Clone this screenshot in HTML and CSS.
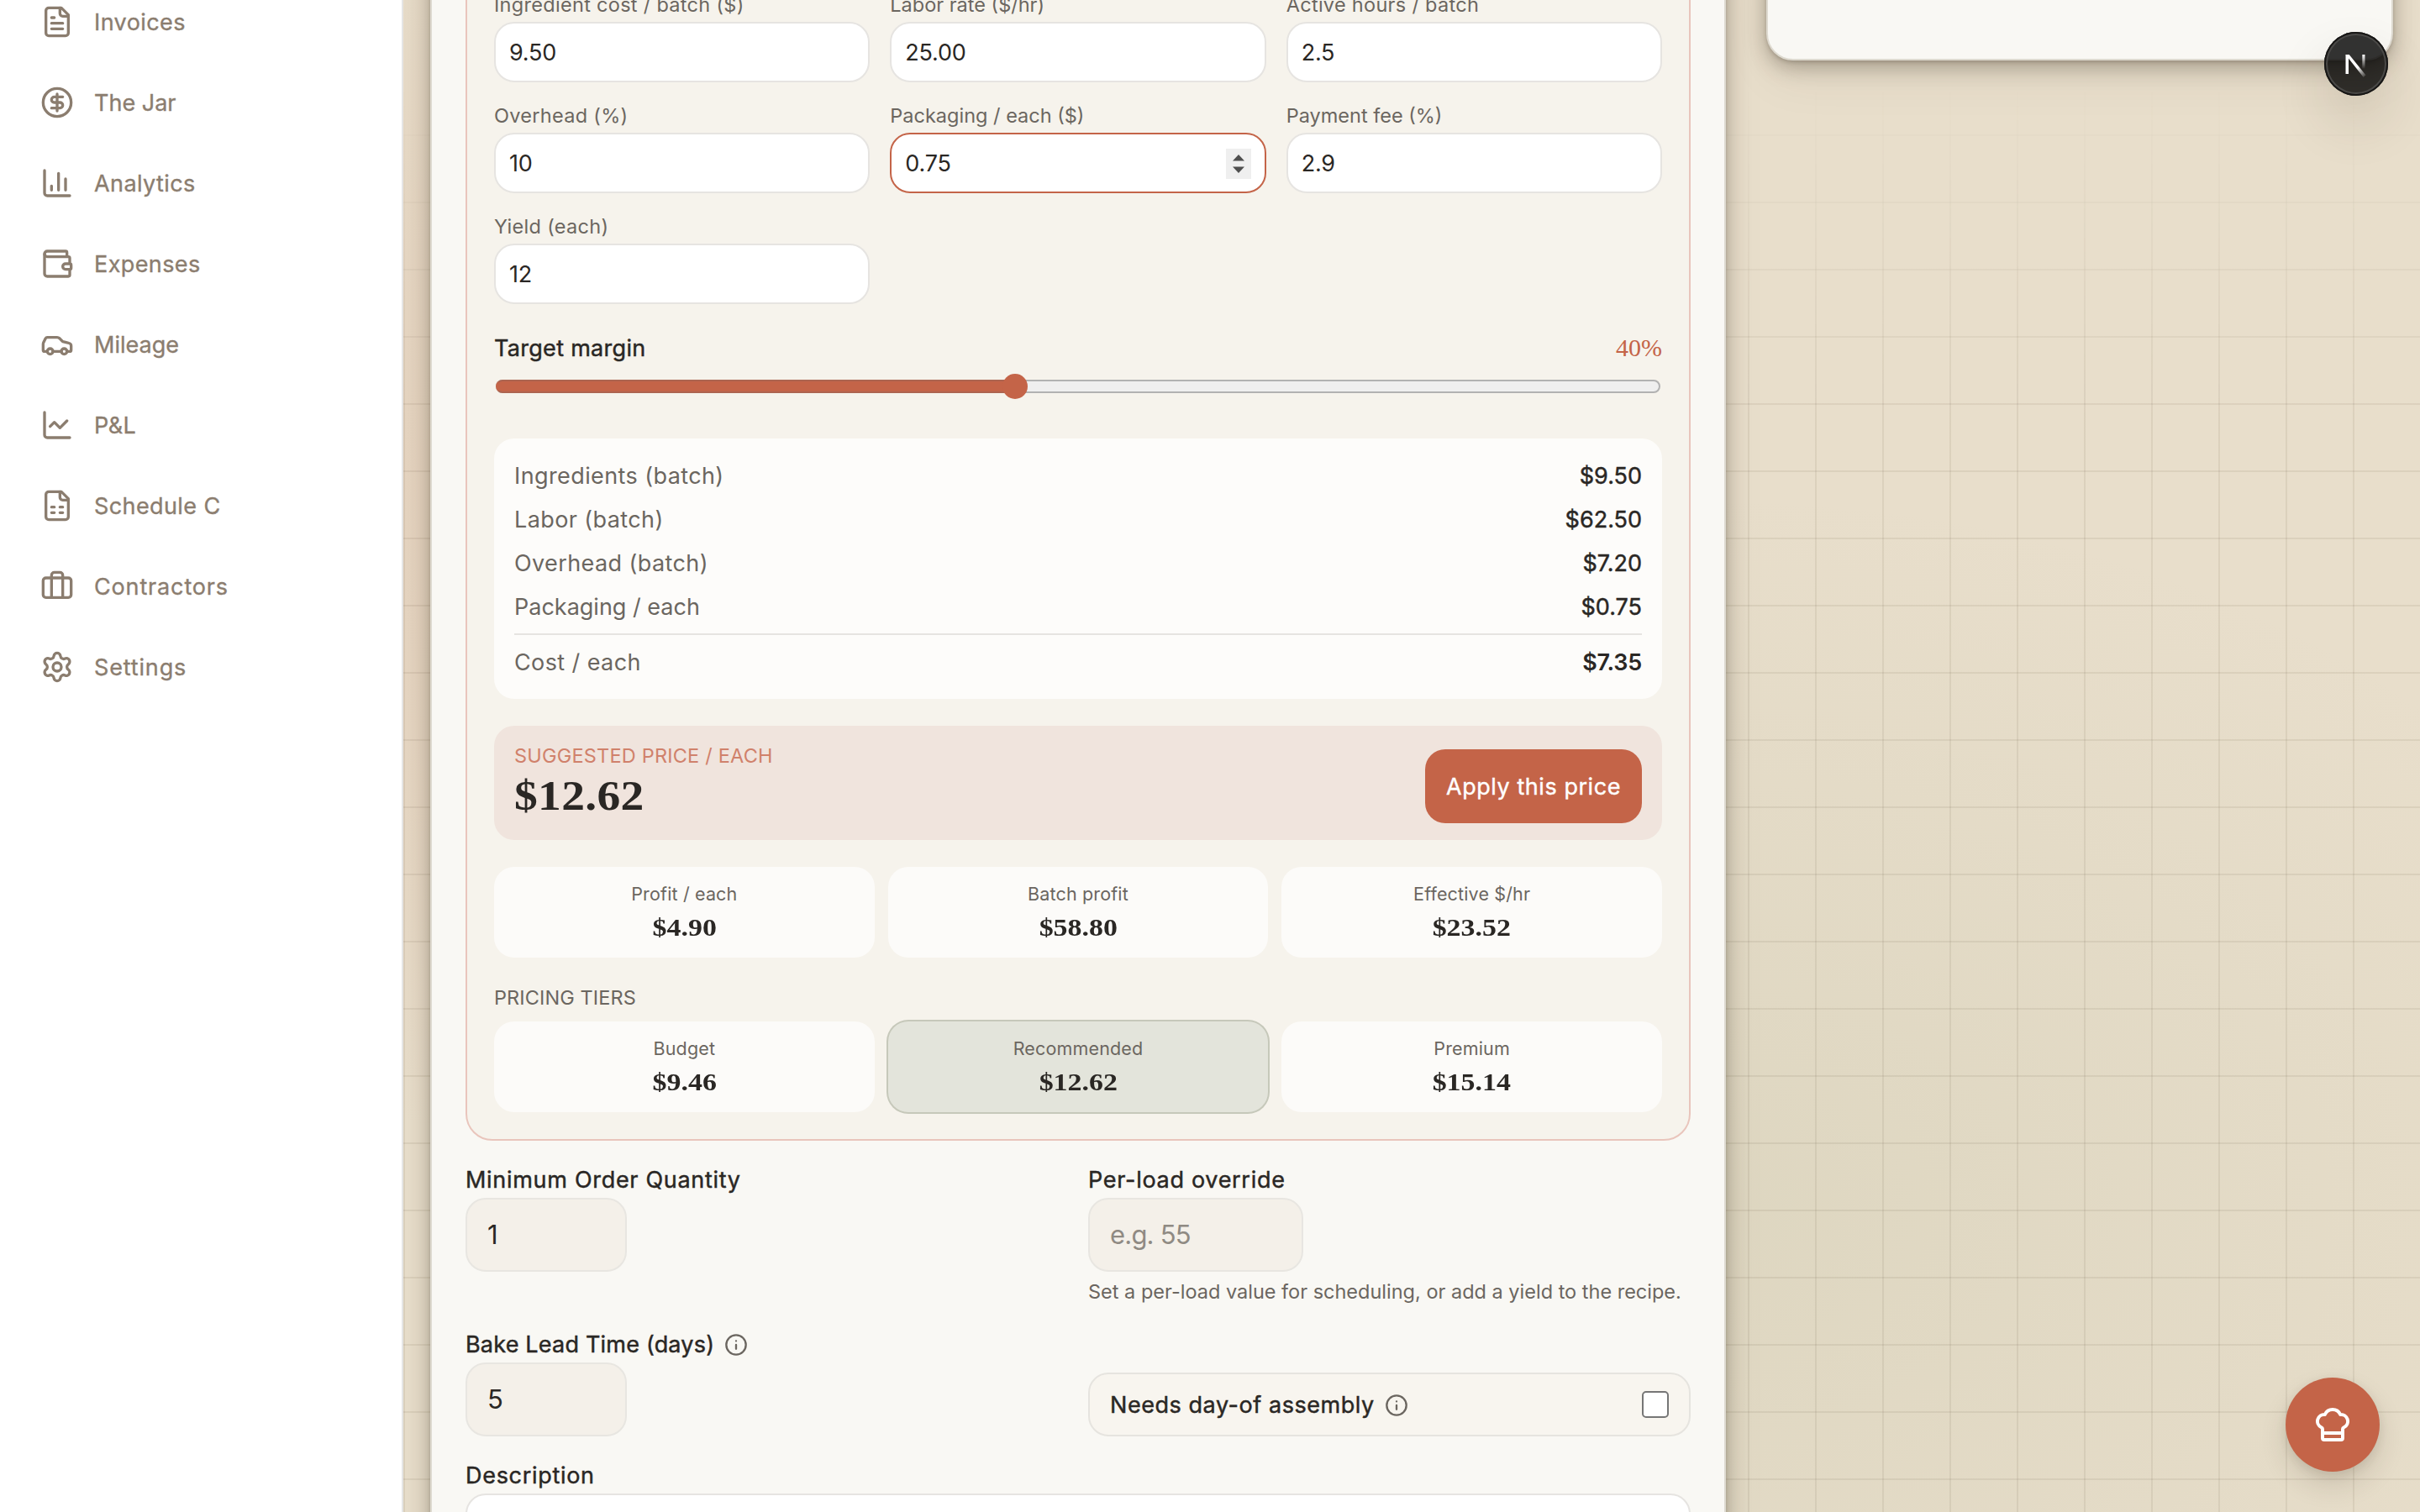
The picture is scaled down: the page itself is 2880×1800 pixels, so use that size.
FILE: index.html
```
<!DOCTYPE html>
<html lang="en">
<head>
<meta charset="utf-8">
<title>Product pricing</title>
<link rel="stylesheet" href="styles.css">
</head>
<body>
<div class="app">
  <aside class="sidebar">
    <nav class="nav">
      <a class="nav-item"><svg class="icon" viewBox="0 0 24 24"><path d="M15 2H6a2 2 0 0 0-2 2v16a2 2 0 0 0 2 2h12a2 2 0 0 0 2-2V7Z"/><path d="M14 2v4a2 2 0 0 0 2 2h4"/><path d="M10 9H8M16 13H8M16 17H8"/></svg><span>Invoices</span></a>
      <a class="nav-item"><svg class="icon" viewBox="0 0 24 24"><circle cx="12" cy="12" r="10"/><path d="M16 8h-6a2 2 0 1 0 0 4h4a2 2 0 1 1 0 4H8"/><path d="M12 18V6"/></svg><span class="tight">The Jar</span></a>
      <a class="nav-item"><svg class="icon" viewBox="0 0 24 24"><path d="M3 3v16a2 2 0 0 0 2 2h16"/><path d="M18 17V9M13 17V5M8 17v-3"/></svg><span>Analytics</span></a>
      <a class="nav-item"><svg class="icon" viewBox="0 0 24 24"><path d="M19 7V4a1 1 0 0 0-1-1H5a2 2 0 0 0 0 4h15a1 1 0 0 1 1 1v4h-3a2 2 0 0 0 0 4h3a1 1 0 0 0 1-1v-2a1 1 0 0 0-1-1"/><path d="M3 5v14a2 2 0 0 0 2 2h15a1 1 0 0 0 1-1v-4"/></svg><span>Expenses</span></a>
      <a class="nav-item"><svg class="icon" viewBox="0 0 24 24"><path d="M19 17h2c.6 0 1-.4 1-1v-3c0-.9-.7-1.7-1.5-1.9C18.7 10.6 16 10 16 10s-1.3-1.4-2.2-2.3c-.5-.4-1.1-.7-1.8-.7H5c-.6 0-1.1.4-1.4.9l-1.4 2.9A3.7 3.7 0 0 0 2 12v4c0 .6.4 1 1 1h2"/><circle cx="7" cy="17" r="2"/><path d="M9 17h6"/><circle cx="17" cy="17" r="2"/></svg><span class="tight">Mileage</span></a>
      <a class="nav-item"><svg class="icon" viewBox="0 0 24 24"><path d="M3 3v16a2 2 0 0 0 2 2h16"/><path d="m19 9-5 5-4-4-3 3"/></svg><span>P&amp;L</span></a>
      <a class="nav-item"><svg class="icon" viewBox="0 0 24 24"><path d="M15 2H6a2 2 0 0 0-2 2v16a2 2 0 0 0 2 2h12a2 2 0 0 0 2-2V7Z"/><path d="M14 2v4a2 2 0 0 0 2 2h4"/><path d="M8 13h2M14 13h2M8 17h2M14 17h2"/></svg><span>Schedule C</span></a>
      <a class="nav-item"><svg class="icon" viewBox="0 0 24 24"><path d="M16 20V4a2 2 0 0 0-2-2h-4a2 2 0 0 0-2 2v16"/><rect x="2" y="6" width="20" height="14" rx="2"/></svg><span class="loose">Contractors</span></a>
      <a class="nav-item"><svg class="icon" viewBox="0 0 24 24"><path d="M9.671 4.136a2.34 2.34 0 0 1 4.659 0 2.34 2.34 0 0 0 3.319 1.915 2.34 2.34 0 0 1 2.33 4.033 2.34 2.34 0 0 0 0 3.831 2.34 2.34 0 0 1-2.33 4.033 2.34 2.34 0 0 0-3.319 1.915 2.34 2.34 0 0 1-4.659 0 2.34 2.34 0 0 0-3.32-1.915 2.34 2.34 0 0 1-2.33-4.033 2.34 2.34 0 0 0 0-3.831A2.34 2.34 0 0 1 6.35 6.051a2.34 2.34 0 0 0 3.319-1.915"/><circle cx="12" cy="12" r="3"/></svg><span class="loose">Settings</span></a>
    </nav>
  </aside>

  <main class="main">
    <section class="card form-card">
      <div class="calculator">
        <div class="fields">
          <label class="field"><span class="field-label wide">Ingredient cost / batch ($)</span><span class="field-input">9.50</span></label>
          <label class="field"><span class="field-label">Labor rate ($/hr)</span><span class="field-input">25.00</span></label>
          <label class="field"><span class="field-label wide">Active hours / batch</span><span class="field-input">2.5</span></label>
          <label class="field"><span class="field-label wide">Overhead (%)</span><span class="field-input">10</span></label>
          <label class="field"><span class="field-label">Packaging / each ($)</span><span class="field-input focused">0.75
            <svg class="stepper" viewBox="0 0 30 36"><path d="M15 7l7 7.500H8zM15 29l7-7.500H8z"/></svg></span></label>
          <label class="field"><span class="field-label">Payment fee (%)</span><span class="field-input">2.9</span></label>
          <label class="field"><span class="field-label wide">Yield (each)</span><span class="field-input">12</span></label>
        </div>

        <div class="margin">
          <div class="margin-head"><span class="strong-label tighter">Target margin</span><span class="margin-value">40%</span></div>
          <div class="slider"><div class="slider-fill" style="width:44.6%"></div><div class="slider-thumb" style="left:44.6%"></div></div>
        </div>

        <dl class="summary">
          <div class="summary-row"><dt class="loose">Ingredients (batch)</dt><dd>$9.50</dd></div>
          <div class="summary-row"><dt class="loose">Labor (batch)</dt><dd>$62.50</dd></div>
          <div class="summary-row"><dt class="loose">Overhead (batch)</dt><dd>$7.20</dd></div>
          <div class="summary-row"><dt>Packaging / each</dt><dd>$0.75</dd></div>
          <div class="summary-row total"><dt class="loose">Cost / each</dt><dd>$7.35</dd></div>
        </dl>

        <div class="suggested">
          <div><div class="suggested-label">SUGGESTED PRICE / EACH</div><div class="suggested-price">$12.62</div></div>
          <button class="apply">Apply this price</button>
        </div>

        <div class="tiles">
          <div class="tile"><span class="tile-label">Profit / each</span><span class="tile-value">$4.90</span></div>
          <div class="tile"><span class="tile-label">Batch profit</span><span class="tile-value">$58.80</span></div>
          <div class="tile"><span class="tile-label">Effective $/hr</span><span class="tile-value">$23.52</span></div>
        </div>

        <div class="tiers">
          <div class="tiers-title">PRICING TIERS</div>
          <div class="tiles">
            <div class="tile"><span class="tile-label">Budget</span><span class="tile-value">$9.46</span></div>
            <div class="tile selected"><span class="tile-label">Recommended</span><span class="tile-value">$12.62</span></div>
            <div class="tile"><span class="tile-label">Premium</span><span class="tile-value">$15.14</span></div>
          </div>
        </div>
      </div>

      <div class="options">
        <div class="option"><span class="strong-label">Minimum Order Quantity</span><span class="big-input small">1</span></div>
        <div class="option"><span class="strong-label">Per-load override</span><span class="big-input medium placeholder">e.g. 55</span><span class="hint">Set a per-load value for scheduling, or add a yield to the recipe.</span></div>
        <div class="option"><span class="strong-label days">Bake Lead Time (days)<svg class="info" viewBox="0 0 24 24"><circle cx="12" cy="12" r="10"/><path d="M12 16v-4M12 8h.01"/></svg></span><span class="big-input small">5</span></div>
        <div class="assembly"><span class="strong-label">Needs day-of assembly<svg class="info" viewBox="0 0 24 24"><circle cx="12" cy="12" r="10"/><path d="M12 16v-4M12 8h.01"/></svg></span><span class="checkbox"></span></div>
      </div>

      <div class="option"><span class="strong-label">Description</span><div class="textarea"></div></div>
    </section>

    <section class="card side-card"></section>
  </main>
</div>

<div class="dev-badge">
  <svg viewBox="0 0 76 76">
    <defs>
      <linearGradient id="fade-diag" gradientUnits="userSpaceOnUse" x1="40" y1="42" x2="50" y2="54"><stop offset="0" stop-color="#fff"/><stop offset="1" stop-color="#fff" stop-opacity="0"/></linearGradient>
      <linearGradient id="fade-bar" gradientUnits="userSpaceOnUse" x1="0" y1="27" x2="0" y2="44"><stop offset="0" stop-color="#fff"/><stop offset="1" stop-color="#fff" stop-opacity="0"/></linearGradient>
    </defs>
    <path d="M25.500 27h3.500v23h-3.500z" fill="#fff"/>
    <path d="M25.500 27h4.200L49.500 51.500l-2.800 2.600z" fill="url(#fade-diag)"/>
    <path d="M45.300 27h3.200v17h-3.200z" fill="url(#fade-bar)"/>
  </svg>
</div>

<button class="fab"><svg viewBox="0 0 24 24"><path d="M17 21a1 1 0 0 0 1-1v-5.350c0-.457.316-.844.727-1.041a4 4 0 0 0-2.134-7.589 5 5 0 0 0-9.186 0 4 4 0 0 0-2.134 7.588c.411.198.727.585.727 1.041V20a1 1 0 0 0 1 1Z"/><path d="M6 17h12"/></svg></button>
</body>
</html>
```
FILE: styles.css
```
* { box-sizing: border-box; }

body {
  margin: 0;
  width: 2880px;
  height: 1800px;
  overflow: hidden;
  font-family: Inter, "Liberation Sans", sans-serif;
  font-size: 27px;
  line-height: 40px;
  color: #2a2724;
}

.app { display: flex; height: 1800px; overflow: hidden; }

/* Sidebar */
.sidebar { flex: none; width: 480px; background: #fff; border-right: 2px solid #e5e5e5; position: relative; z-index: 1; }
.nav { display: flex; flex-direction: column; margin-top: -22px; }
.nav-item { display: flex; align-items: center; gap: 24px; height: 96px; padding-left: 48px; color: #8b7d6f; letter-spacing: .4px; -webkit-text-stroke: .35px currentColor; }
.nav-item span { padding-top: 2px; }
.nav-item .tight { letter-spacing: 0; }
.nav-item .loose { letter-spacing: .85px; }
.icon { width: 40px; height: 40px; fill: none; stroke: currentColor; stroke-width: 2; stroke-linecap: round; stroke-linejoin: round; }

/* Page surface */
.main {
  flex: 1;
  display: grid;
  grid-template-columns: 1542px 746px;
  align-items: start;
  gap: 48px;
  padding: 0 32px;
  position: relative;
  background:
    radial-gradient(ellipse 900px 800px at 400px 620px, rgba(218, 165, 140, .30), rgba(218, 165, 140, 0)),
    radial-gradient(ellipse 1200px 850px at 1560px 1440px, rgba(186, 188, 156, .22), rgba(186, 188, 156, 0)),
    #e8decb;
}
.main::before {
  content: "";
  position: absolute;
  inset: 0;
  background:
    linear-gradient(rgba(90, 75, 50, .09) 2px, transparent 2px) 0 0 / 80px 80px,
    linear-gradient(90deg, rgba(90, 75, 50, .09) 2px, transparent 2px) 0 0 / 80px 80px;
  mask-image: linear-gradient(transparent 100px, #000 500px);
}

.card {
  position: relative;
  margin-top: -86px;
  background: #f9f8f4;
  border: 2px solid #dedad0;
  border-radius: 32px;
  box-shadow: 0 2px 4px rgba(60, 50, 35, .2), 0 8px 24px rgba(60, 50, 35, .36), 0 24px 56px rgba(60, 50, 35, .06);
}
.form-card { padding: 40px; height: 2040px; display: flex; flex-direction: column; gap: 24px; }
.side-card { height: 158px; }

/* Calculator */
.calculator { display: flex; flex-direction: column; gap: 32px; padding: 32px; background: #f6f3ec; border: 2px solid #e9c5bc; border-radius: 32px; }
.fields { display: grid; grid-template-columns: repeat(3, 1fr); gap: 24px; }
.field { display: flex; flex-direction: column; gap: 4px; }
.field-label { font-size: 23.500px; line-height: 32px; color: #6b6660; }
.field-label.wide { letter-spacing: .3px; }
.field-input { display: flex; align-items: center; justify-content: space-between; height: 72px; padding: 1px 32px 0 16px; letter-spacing: -.2px; background: #fff; border: 2px solid #e6e4e1; border-radius: 24px; }
.field-input.focused { border-color: #c46448; padding-right: 16px; }
.stepper { width: 30px; height: 36px; background: #efefef; fill: #4f4f4f; }

.margin { height: 96px; }
.margin-head { display: flex; justify-content: space-between; }
.margin-value { font-family: "Liberation Serif", serif; font-size: 30px; color: #c46448; }
.slider { position: relative; height: 16px; margin: 18px 2px 0; background: #efefef; border: 2px solid #b2b2b2; border-radius: 8px; }
.slider-fill { height: 16px; margin: -2px 0 0 -2px; background: #c46448; border: 2px solid #ad6450; border-right: 0; border-left-color: #c46448; border-radius: 8px 0 0 8px; }
.slider-thumb { position: absolute; top: -9px; width: 30px; height: 30px; margin-left: -15px; background: #c46448; border-radius: 50%; }

.strong-label { display: flex; align-items: center; gap: 12px; padding-top: 1px; line-height: 39px; letter-spacing: .7px; -webkit-text-stroke: .45px currentColor; }
.strong-label.tighter { letter-spacing: .3px; }
.strong-label.days { letter-spacing: .2px; }
.info { width: 28px; height: 28px; fill: none; stroke: #6b6660; stroke-width: 2; stroke-linecap: round; }

.summary { display: flex; flex-direction: column; gap: 12px; margin: 0; padding: 24px; background: #fdfcfa; border-radius: 24px; }
.summary-row { display: flex; justify-content: space-between; }
.summary dt, .summary dd { margin: 0; padding-top: 2px; line-height: 38px; }
.summary dt { color: #6b6660; }
.summary .loose { letter-spacing: .4px; }
.summary dd { letter-spacing: 0; -webkit-text-stroke: .45px currentColor; }
.summary-row.total { border-top: 2px solid #e6e4e1; padding-top: 12px; }
.summary .total dd { font-weight: 600; -webkit-text-stroke: 0; letter-spacing: -.2px; }

.suggested { display: flex; justify-content: space-between; align-items: flex-end; padding: 20px 24px; background: #f0e4dd; border-radius: 24px; }
.suggested-label { font-size: 23.500px; line-height: 32px; letter-spacing: .2px; color: #d0816b; }
.suggested-price { font: 700 50px/62px "Liberation Serif", serif; padding-bottom: 2px; letter-spacing: .3px; transform: scaleX(1.110); transform-origin: left; }
.apply { width: 258px; height: 88px; padding: 0; border: 0; border-radius: 24px; background: #c46448; color: #fff; font: 400 27px Inter, sans-serif; letter-spacing: .55px; -webkit-text-stroke: .4px #fff; }

.tiles { display: grid; grid-template-columns: repeat(3, 1fr); gap: 16px; }
.tile { display: flex; flex-direction: column; align-items: center; gap: 4px; padding: 16px; background: #fcfbf9; border-radius: 24px; }
.tile.selected { background: #e3e4db; box-shadow: 0 0 0 2px #c6c8ba; }
.tile-label { font-size: 21.500px; line-height: 32px; color: #6b6660; letter-spacing: .15px; }
.tile-value { font: 700 30px/40px "Liberation Serif", serif; transform: scaleX(1.130); }
.tiers { display: flex; flex-direction: column; gap: 12px; }
.tiers-title { font-size: 23.500px; line-height: 32px; letter-spacing: .1px; color: #6b6660; }

/* Options below the calculator */
.options { display: grid; grid-template-columns: 1fr 1fr; gap: 24px; }
.option { display: flex; flex-direction: column; align-items: flex-start; }
.option .strong-label { height: 44px; padding-top: 2px; line-height: 40px; }
.big-input { display: flex; align-items: center; height: 88px; padding: 0 24px; font-size: 31px; background: #f4f0e9; border: 2px solid #e8e6e1; border-radius: 24px; }
.big-input.small { width: 192px; }
.big-input.medium { width: 256px; }
.placeholder { color: #8f8a83; letter-spacing: -.8px; }
.hint { margin-top: 8px; font-size: 23.500px; line-height: 32px; color: #6b6660; white-space: nowrap; }
.assembly { align-self: end; display: flex; align-items: center; justify-content: space-between; height: 76px; padding: 0 24px; background: #f8f5ef; border: 2px solid #e6e4df; border-radius: 24px; }
.assembly .strong-label { letter-spacing: .55px; }
.checkbox { width: 32px; height: 32px; background: #fff; border: 2px solid #767676; border-radius: 5px; }
.textarea { width: 100%; height: 160px; background: #fff; border: 2px solid #e6e4e1; border-radius: 24px; }
.option .strong-label { margin-bottom: 0; }

/* Floating controls */
.dev-badge { position: absolute; z-index: 2; left: 2766px; top: 38px; width: 76px; height: 76px; border-radius: 50%; background: rgba(0, 0, 0, .8); box-shadow: inset 0 0 0 2px #171615, inset 0 0 0 4px #4a4947, 0 32px 64px rgba(60, 45, 30, .14); }
.dev-badge svg { display: block; width: 76px; height: 76px; }
.fab { position: absolute; z-index: 2; left: 2720px; top: 1640px; width: 112px; height: 112px; padding: 32px; border: 0; border-radius: 50%; background: #c46448; box-shadow: 0 16px 32px rgba(60, 45, 30, .14), 0 4px 12px rgba(60, 45, 30, .1); }
.fab svg { display: block; width: 48px; height: 48px; fill: none; stroke: #fff; stroke-width: 2; stroke-linecap: round; stroke-linejoin: round; }
```
